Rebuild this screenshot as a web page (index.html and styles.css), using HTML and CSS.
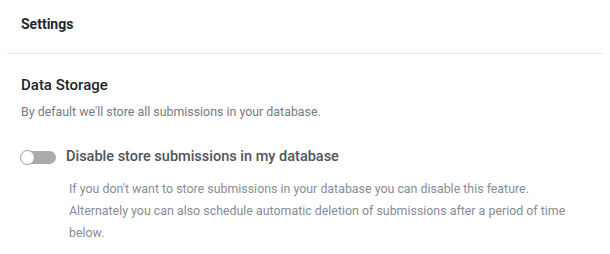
FILE: index.html
```html
<!DOCTYPE html>
<html>
<head>
<meta charset="utf-8">
<link rel="stylesheet" href="styles.css">
</head>
<body>
<div class="panel">
  <div class="panel-header">Settings</div>
  <div class="panel-body">
    <h3 class="section-title">Data Storage</h3>
    <p class="section-desc">By default we'll store all submissions in your database.</p>
    <div class="toggle-row">
      <span class="toggle"><span class="knob"></span></span>
      <span class="toggle-label">Disable store submissions in my database</span>
    </div>
    <p class="toggle-help">If you don't want to store submissions in your database you can disable this feature. Alternately you can also schedule automatic deletion of submissions after a period of time below.</p>
  </div>
</div>
</body>
</html>
```
FILE: styles.css
```css
* { box-sizing: border-box; }
html, body { margin: 0; padding: 0; background: #fff; }
body { font-family: Roboto, "Noto Sans", sans-serif; }
.panel { width: 610px; padding: 0 7px; }
.panel-header {
  padding: 14px 14px 0;
  height: 54px;
  font-size: 14px;
  font-weight: 700;
  color: #23282d;
  line-height: 20px;
  border-bottom: 1px solid #e2e4e7;
}
.panel-body { padding: 21px 14px 0; }
.section-title {
  margin: 0;
  font-size: 15px;
  font-weight: 500;
  color: #1e1f2e;
  line-height: 20px;
}
.section-desc {
  margin: 8px 0 0;
  font-size: 12.4px;
  color: #767b84;
  line-height: 18px;
}
.toggle-row {
  display: flex;
  align-items: center;
  gap: 10px;
  margin-top: 26px;
}
.toggle {
  width: 35px;
  height: 13px;
  border-radius: 7px;
  background: #ababab;
  position: relative;
  flex: none;
}
.knob {
  position: absolute;
  left: -1px;
  top: -1px;
  width: 15px;
  height: 15px;
  border-radius: 50%;
  background: #fff;
  border: 1px solid #9a9a9a;
}
.toggle-label {
  font-size: 14.5px;
  font-weight: 500;
  color: #50545c;
  line-height: 20px;
}
.toggle-help {
  margin: 11px 0 0 48px;
  font-size: 12.4px;
  color: #878c96;
  line-height: 22px;
  max-width: 540px;
}
```
